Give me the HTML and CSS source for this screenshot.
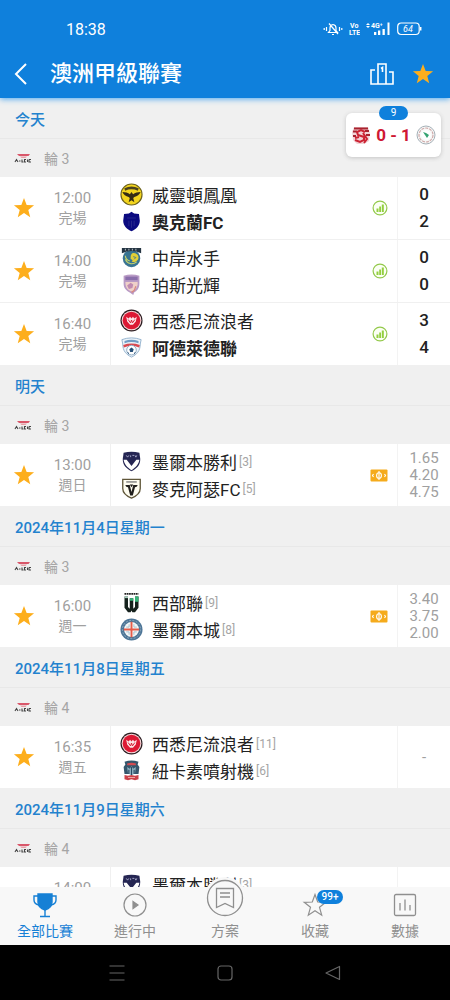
FILE: index.html
```html
<!DOCTYPE html>
<html lang="zh-Hant">
<head>
<meta charset="utf-8">
<meta name="viewport" content="width=device-width, initial-scale=1">
<title>澳洲甲級聯賽</title>
<link rel="stylesheet" href="styles.css">
</head>
<body>
<svg class="sprite" aria-hidden="true">
  <symbol id="star" viewBox="0 0 24 24"><path d="M12 1l2.9 7.6 8.1.4-6.300 5.100 2.100 7.900L12 17.500 5.200 22l2.100-7.900L1 9l8.100-.4z"/></symbol>
  <symbol id="league" viewBox="0 0 18 10">
    <path d="M3 1h13l-1.500 2H5z" fill="#d9576a"/><path d="M6 3.500h7L11.500 5H7.500z" fill="#e8a0a8"/>
    <path d="M1 9l1.500-2.500L4 9M5 8h1.500M8 6.500V9h1.500M12 6.500h-1.500V9H12M13.500 6.500V9M15 6.500V9h2M15 6.500h2" fill="none" stroke="#444" stroke-width="1.100"/>
  </symbol>
  <symbol id="chart" viewBox="0 0 16 16"><circle cx="8" cy="8" r="6.900" fill="#fbfff4" stroke="#93c94b" stroke-width="1.200"/><path d="M4.500 8.500h2v3.500h-2zM7.200 6.500h1.800V12H7.200zM9.800 4.500h2V12h-2z" fill="#93cf3f"/></symbol>
  <symbol id="ticket" viewBox="0 0 18 13"><rect x=".5" y=".5" width="17" height="12" rx="1" fill="#f5ab1c"/><ellipse cx="9" cy="6.500" rx="2.400" ry="2.800" fill="none" stroke="#fff" stroke-width="1.100"/><path d="M9 2v9M3.500 5L2.500 6.500 3.500 8M14.500 5l1 1.500-1 1.500" fill="none" stroke="#fff" stroke-width="1.100"/></symbol>
  <symbol id="phoenix" viewBox="0 0 24 24"><circle cx="12" cy="12" r="11" fill="#f3d51e" stroke="#6f641c" stroke-width="1.200"/><path d="M4.500 5.500Q12 2 19.500 5.500l-.8 2.500Q12 5 5.300 8z" fill="#4b421c"/><path d="M2.500 9.500c3 .2 6 .6 7.800 2.200L12 9.500l1.700 2.200c1.800-1.600 4.800-2 7.800-2.200-1 2.800-3.600 4.500-6.500 5l-1.200 1.200L15 20l-3-2-3 2 1.200-4.300L9 14.500c-2.900-.5-5.500-2.200-6.500-5z" fill="#342c16"/></symbol>
  <symbol id="auckland" viewBox="0 0 24 24"><path d="M12 .8l3 2 5.500.7 1 7.500c0 6-4.500 9.500-9.500 12.200C7 20.500 2.500 17 2.500 11l1-7.500L9 2.800z" fill="#0b0a80"/><path d="M7 8h10M9 11v6M12 11v8M15 11v6" stroke="#25268b" stroke-width="1.200"/></symbol>
  <symbol id="mariners" viewBox="0 0 24 24"><circle cx="12" cy="13" r="10" fill="#397492"/><path d="M1 1h22v6Q12 2 1 7z" fill="#253543"/><path d="M5 2v2M9 2v2M13 2v2M17 2v2" stroke="#c8d2d8"/><path d="M13 7c4-1 7 2 7 5s-3 6-8 5c2-1 1-3-1-3 0-3 0-6 2-7z" fill="#e2cf37"/><path d="M5 14c2 5 8 7 13 3M5 10c0 3 2 5 5 6" fill="none" stroke="#c3d36a" stroke-width="1.300"/><path d="M14 11l3 1-2 2" fill="none" stroke="#397492"/></symbol>
  <symbol id="glory" viewBox="0 0 24 24"><path d="M3 2Q12-1 21 2v9c0 6-3 8-6 10l-1 3-4-3c-4-2-7-5-7-10z" fill="#b99bc5"/><path d="M5 9h14v3c-1 5-4 7-7 8-4-2-7-4-7-11z" fill="#efd0c8"/><path d="M5 3h14v4H5z" fill="#8a6eab"/><path d="M7 13l4-3 3 2-1 4-4 1z" fill="#c08ab0"/><path d="M17 14l-2 5-3 2" fill="none" stroke="#d98a80" stroke-width="1.500"/></symbol>
  <symbol id="wanderers" viewBox="0 0 24 24"><circle cx="12" cy="12" r="11.500" fill="#2a1c20"/><circle cx="12" cy="12" r="10.300" fill="#f5d8d9"/><circle cx="12" cy="12" r="9.200" fill="#dc1934"/><path d="M6.500 8l2.500 2 1.500-2 1.500 2 1.500-2 1.500 2 2.500-2-1 5-3 3.500h-3l-3-3.500z" fill="#fbe6e8"/><path d="M8.500 11l2.500 3.500 1-3 1 3 2.500-3.500" fill="none" stroke="#d41831" stroke-width="1"/></symbol>
  <symbol id="adelaide" viewBox="0 0 24 24"><path d="M1 3Q12-1 23 3l-1 5c0 8-4 12-10 15C6 20 2 16 2 8z" fill="#edf4fa" stroke="#8aacc9"/><path d="M4 4.500Q12 2 20 4.500V7Q12 4.500 4 7z" fill="#719cc4"/><path d="M2.500 9Q12 6 21.500 9l-.8 3Q12 8 3.300 12z" fill="#d94950"/><circle cx="12" cy="15" r="5.500" fill="#fff" stroke="#86a4bd"/><path d="M12 12l2.500 2-1 3h-3l-1-3zM7 17l2 1v2zM17 17l-2 1v2z" fill="#244e77"/></symbol>
  <symbol id="victory" viewBox="0 0 24 24"><path d="M3 2Q12-.5 21 2l1 7c0 7-4 11-10 14C6 20 2 16 2 9z" fill="#252653"/><path d="M3 10h3.500l5.500 7 5.500-7H21c-.5 5-4.500 9-9 12-4.500-3-8.500-7-9-12z" fill="#fff"/><path d="M6 5l1.500 2L9 5m2 0v2m2-2h2m1 0l1 2 1-2" fill="none" stroke="#b4b5d4"/></symbol>
  <symbol id="macarthur" viewBox="0 0 24 24"><path d="M2 1.500h20V12c0 5-4 8.500-10 11C6 20.500 2 17 2 12z" fill="#fffdf0" stroke="#5f5639" stroke-width="1.500"/><path d="M6 4.500h12" stroke="#777" stroke-width="1.500"/><path d="M5 8h5l2 8 2-8h5c-.5 2-1.500 2.500-3 2.500L13.500 20h-3L8 10.500C6.500 10.500 5.500 10 5 8z" fill="#211f1c"/><path d="M10 7.500h4l-2 3z" fill="#211f1c"/></symbol>
  <symbol id="western" viewBox="0 0 24 24"><path d="M4 2h16" stroke="#222" stroke-width="2" stroke-dasharray="2 .6"/><path d="M4 5h4v12l2 2V7h4v12l2-2V5h4v13l-4 5h-3l-1-2-1 2H8l-4-5z" fill="#15211d"/><path d="M16 5h4v6h-4zM10 7h4v3h-4z" fill="#36b579"/><path d="M4 5h4v2H4z" fill="#a9cdbd"/></symbol>
  <symbol id="city" viewBox="0 0 24 24"><circle cx="12" cy="12" r="11.500" fill="#4d7597"/><circle cx="12" cy="12" r="9.500" fill="none" stroke="#92acbf" stroke-dasharray="2 1.500"/><circle cx="12" cy="12" r="7.800" fill="#f5f7f7"/><path d="M12 4v16M4 12h16" stroke="#e65b49" stroke-width="2"/><path d="M6.500 9.500h3v-3m5 0v3h3m0 5h-3v3m-5 0v-3h-3" fill="none" stroke="#a3bfd0"/></symbol>
  <symbol id="jets" viewBox="0 0 24 24"><path d="M4 2Q12-1 20 2l-1 3 2 3-1 8H4L3 8l2-3z" fill="#34566c"/><path d="M7 4q5-2 10 0v2H7z" fill="#d34b51"/><path d="M7 8l3 2 2-3 2 3 3-2-1 7-3 2h-2l-3-2z" fill="#92b4c3"/><path d="M12 8v9M9 11v5M15 11v5" stroke="#294b63" stroke-width="1.300"/><path d="M4 17l4 1 4-1 4 1 4-1v5l-4 1-4-1-4 1-4-1z" fill="#cb4149"/><path d="M8 20h8" stroke="#f1b2ae"/></symbol>
</svg>

<div class="app">
  <header class="header">
    <div class="status">
      <span>18:38</span>
      <div class="status-icons">
        <svg width="20" height="16" viewBox="0 0 20 16" fill="none" stroke="#fff" stroke-width="1.200"><path d="M5.500 11.500h9l-1.500-2V7q0-3-3-3.500Q7 4 7 7v2.500zM9 13.500h2M6 2.500l9 10.500M3.500 6v4M1.200 7v2M16.500 6v4M18.800 7v2"/></svg>
        <svg width="11" height="16" viewBox="0 0 11 16" fill="#fff"><text class="tiny" x="1" y="7">Vo</text><text class="tiny" x="0" y="14">LTE</text></svg>
        <svg width="25" height="16" viewBox="0 0 25 16" fill="#fff"><path d="M0 4l2-2 2 2zM0 5l2 2 2-2zM8 11h2.300v3H8zM12 9.500h2.300V14H12zM16.500 8h2.300v6h-2.300zM21.500 1.500h2V14h-2z"/><text class="tiny" x="5" y="7">4G⁺</text></svg>
        <svg width="25" height="14" viewBox="0 0 25 14"><rect x=".7" y="1" width="21.500" height="11.500" rx="3.500" fill="none" stroke="#fff" stroke-width="1.200"/><path d="M23.700 5v3.500" stroke="#fff" stroke-width="1.500"/><text class="charge" x="6" y="10" fill="#fff">64</text></svg>
      </div>
    </div>
    <div class="titlebar">
      <button class="icon-button back" aria-label="返回"><svg width="14" height="22" viewBox="0 0 14 22" fill="none" stroke="#fff" stroke-width="2"><path d="M12 1L2 11l10 10"/></svg></button>
      <h1>澳洲甲級聯賽</h1>
      <button class="icon-button" aria-label="排名"><svg width="24" height="22" viewBox="0 0 24 22" fill="none" stroke="#fff" stroke-width="1.600"><path d="M8 21V1h8v20zM5 7H1v14h7M19 9h4v12h-7M11 5.500l1.500-1V9"/></svg></button>
      <button class="icon-button favourite" aria-label="收藏聯賽"><svg width="22" height="22"><use href="#star"/></svg></button>
    </div>
  </header>

  <main class="list">
    <a class="live" href="#live" aria-label="即時比分">
      <span class="live-count">9</span>
      <svg width="20" height="20" viewBox="0 0 20 20"><path d="M3 2h14l2 6-1 8-5 3H6l-4-4-1-8z" fill="#f2d2d6"/><path d="M3 3.500h14M2 6.500h4M14 6h4M2 11h3M15 10h4" stroke="#a8232f" stroke-width="2"/><path d="M14 7l-4-2-4 2 1 3 6 2v3l-4 2-5-2M4 13l4-1m4-4l4 6-3 4" fill="none" stroke="#cc2434" stroke-width="2"/></svg>
      <strong>0 - 1</strong>
      <svg width="20" height="20" viewBox="0 0 20 20"><circle cx="10" cy="10" r="9" fill="#f8f9f8" stroke="#a5b0b7"/><circle cx="10" cy="10" r="7" fill="none" stroke="#cfaaaa" stroke-width="1.200" stroke-dasharray="3 1"/><circle cx="10" cy="10" r="4.800" fill="#fff"/><path d="M7 7l3 1 3 2-2 3-2-3z" fill="#35a371"/></svg>
    </a>

    <section>
      <h2>今天</h2>
      <h3><svg width="18" height="10"><use href="#league"/></svg>輪 3</h3>
      <article class="match">
        <button class="icon-button favourite" aria-label="收藏"><svg width="22" height="22"><use href="#star"/></svg></button>
        <div class="when"><time>12:00</time><span>完場</span></div>
        <div class="teams">
          <div class="team"><svg class="crest large"><use href="#phoenix"/></svg>威靈頓鳳凰</div>
          <div class="team winner"><svg class="crest"><use href="#auckland"/></svg>奧克蘭FC</div>
        </div>
        <svg class="tag" width="16" height="16"><use href="#chart"/></svg>
        <div class="score"><span>0</span><span>2</span></div>
      </article>
      <article class="match">
        <button class="icon-button favourite" aria-label="收藏"><svg width="22" height="22"><use href="#star"/></svg></button>
        <div class="when"><time>14:00</time><span>完場</span></div>
        <div class="teams">
          <div class="team"><svg class="crest"><use href="#mariners"/></svg>中岸水手</div>
          <div class="team"><svg class="crest"><use href="#glory"/></svg>珀斯光輝</div>
        </div>
        <svg class="tag" width="16" height="16"><use href="#chart"/></svg>
        <div class="score"><span>0</span><span>0</span></div>
      </article>
      <article class="match">
        <button class="icon-button favourite" aria-label="收藏"><svg width="22" height="22"><use href="#star"/></svg></button>
        <div class="when"><time>16:40</time><span>完場</span></div>
        <div class="teams">
          <div class="team"><svg class="crest large"><use href="#wanderers"/></svg>西悉尼流浪者</div>
          <div class="team winner"><svg class="crest"><use href="#adelaide"/></svg>阿德萊德聯</div>
        </div>
        <svg class="tag" width="16" height="16"><use href="#chart"/></svg>
        <div class="score"><span>3</span><span>4</span></div>
      </article>
    </section>

    <section>
      <h2>明天</h2>
      <h3><svg width="18" height="10"><use href="#league"/></svg>輪 3</h3>
      <article class="match">
        <button class="icon-button favourite" aria-label="收藏"><svg width="22" height="22"><use href="#star"/></svg></button>
        <div class="when"><time>13:00</time><span>週日</span></div>
        <div class="teams">
          <div class="team"><svg class="crest"><use href="#victory"/></svg>墨爾本勝利<small>[3]</small></div>
          <div class="team"><svg class="crest"><use href="#macarthur"/></svg>麥克阿瑟FC<small>[5]</small></div>
        </div>
        <svg class="tag" width="18" height="13"><use href="#ticket"/></svg>
        <div class="odds"><span>1.65</span><span>4.20</span><span>4.75</span></div>
      </article>
    </section>

    <section>
      <h2>2024年11月4日星期一</h2>
      <h3><svg width="18" height="10"><use href="#league"/></svg>輪 3</h3>
      <article class="match">
        <button class="icon-button favourite" aria-label="收藏"><svg width="22" height="22"><use href="#star"/></svg></button>
        <div class="when"><time>16:00</time><span>週一</span></div>
        <div class="teams">
          <div class="team"><svg class="crest"><use href="#western"/></svg>西部聯<small>[9]</small></div>
          <div class="team"><svg class="crest large"><use href="#city"/></svg>墨爾本城<small>[8]</small></div>
        </div>
        <svg class="tag" width="18" height="13"><use href="#ticket"/></svg>
        <div class="odds"><span>3.40</span><span>3.75</span><span>2.00</span></div>
      </article>
    </section>

    <section>
      <h2>2024年11月8日星期五</h2>
      <h3><svg width="18" height="10"><use href="#league"/></svg>輪 4</h3>
      <article class="match">
        <button class="icon-button favourite" aria-label="收藏"><svg width="22" height="22"><use href="#star"/></svg></button>
        <div class="when"><time>16:35</time><span>週五</span></div>
        <div class="teams">
          <div class="team"><svg class="crest large"><use href="#wanderers"/></svg>西悉尼流浪者<small>[11]</small></div>
          <div class="team"><svg class="crest"><use href="#jets"/></svg>紐卡素噴射機<small>[6]</small></div>
        </div>
        <span class="tag"></span>
        <div class="odds"><span>-</span></div>
      </article>
    </section>

    <section>
      <h2>2024年11月9日星期六</h2>
      <h3><svg width="18" height="10"><use href="#league"/></svg>輪 4</h3>
      <article class="match">
        <button class="icon-button favourite" aria-label="收藏"><svg width="22" height="22"><use href="#star"/></svg></button>
        <div class="when"><time>14:00</time><span>週六</span></div>
        <div class="teams">
          <div class="team"><svg class="crest"><use href="#victory"/></svg>墨爾本勝利<small>[3]</small></div>
        </div>
        <span class="tag"></span>
        <div class="odds"><span>-</span></div>
      </article>
    </section>
  </main>

  <nav class="tabs">
    <a class="tab active" href="#all"><svg width="26" height="26" viewBox="0 0 26 26" fill="none" stroke="currentColor" stroke-width="1.400"><path d="M6 2h14v8q0 6-7 8-7-2-7-8z" fill="currentColor"/><path d="M6 4H2v4q0 4 5 5M20 4h4v4q0 4-5 5M13 18v6M8 24.500h10"/></svg>全部比賽</a>
    <a class="tab" href="#live-now"><svg width="26" height="26" viewBox="0 0 26 26" fill="none" stroke="currentColor" stroke-width="1.200"><circle cx="13" cy="13" r="11"/><path d="M11 9.500l5 3.500-5 3.500z" fill="currentColor"/></svg>進行中</a>
    <a class="tab plan" href="#plan"><svg width="44" height="44" viewBox="0 0 44 44" fill="none" stroke="currentColor" stroke-width="1.300"><circle cx="22" cy="22" r="21" fill="#f8f8f8" stroke="none"/><circle cx="22" cy="22" r="17.500"/><path d="M13.500 12.500h17v19L22 27.500l-8.500 4zM17 17h10M17 21h10"/></svg>方案</a>
    <a class="tab" href="#favourites"><span class="badge-anchor"><svg width="26" height="26" viewBox="0 0 26 26" fill="none" stroke="currentColor" stroke-width="1.200"><path d="M13 2.500l2.700 7.500 8.100.3-6.300 5 2.200 7.900-6.700-4.500-6.700 4.500 2.200-7.900-6.300-5 8.100-.3z"/></svg><span class="badge">99+</span></span>收藏</a>
    <a class="tab" href="#data"><svg width="26" height="26" viewBox="0 0 26 26" fill="none" stroke="currentColor" stroke-width="1.300"><rect x="2.500" y="2.500" width="21" height="21" rx="1.500"/><path d="M8 11v7.500M13 7.500v11M18 13v5.500"/></svg>數據</a>
  </nav>

  <footer class="system">
    <button class="icon-button" aria-label="最近使用"><svg width="18" height="18" viewBox="0 0 18 18"><path d="M1.500 2h15M1.500 9h15M1.500 16h15"/></svg></button>
    <button class="icon-button" aria-label="主畫面"><svg width="18" height="18" viewBox="0 0 18 18"><rect x="2" y="2" width="14" height="14" rx="3"/></svg></button>
    <button class="icon-button" aria-label="上一頁"><svg width="18" height="18" viewBox="0 0 18 18"><path d="M15.500 2.500v13L2 9z" stroke-linejoin="round"/></svg></button>
  </footer>
</div>
</body>
</html>
```

FILE: styles.css
```css
* { box-sizing: border-box; }
body { margin: 0; font-family: Roboto, "Noto Sans CJK TC", sans-serif; color: #222; }
h1, h2, h3 { margin: 0; }
svg { display: block; flex: none; }
a { color: inherit; text-decoration: none; }
.sprite { position: absolute; width: 0; height: 0; }

.app { display: flex; flex-direction: column; height: 100vh; overflow: hidden; background: #f0f0f0; }

.header { flex: none; background: #0f80dc; color: #fff; box-shadow: 0 1px 6px #4ba6ee; position: relative; z-index: 1; }
.status { display: flex; align-items: center; justify-content: space-between; height: 49px; padding: 9px 28px 0 66px; font-size: 16px; }
.status-icons { display: flex; align-items: center; gap: 6px; }
.tiny { font: bold 7px Roboto, sans-serif; }
.charge { font: italic 9px Roboto, sans-serif; }
.titlebar { display: flex; align-items: center; height: 49px; padding: 0 16px 0 14px; }
.titlebar h1 { flex: 1; padding-left: 22px; font-size: 22px; font-weight: 500; line-height: 32px; }
.titlebar .favourite { margin-left: 18px; }

.icon-button { display: grid; place-items: center; padding: 0; border: 0; background: none; cursor: pointer; }
.favourite { color: #fdae1c; fill: currentColor; }

.list { position: relative; flex: 1; min-height: 0; overflow: hidden; }
.list h2 { display: flex; align-items: center; height: 41px; padding-left: 15px; border-bottom: 1px solid #e8e8e8; color: #2382ce; font-size: 15px; font-weight: 500; }
.list h3 { display: flex; align-items: center; gap: 12px; height: 38px; padding-left: 14px; color: #a5a5a5; font-size: 14px; font-weight: 400; }

.match { display: grid; grid-template-columns: 48px 62px 1fr auto 53px; height: 62px; background: #fff; }
.match + .match { margin-top: 1px; }
.when { display: flex; flex-direction: column; justify-content: center; align-items: center; padding-right: 13px; color: #a0a0a0; font-size: 14px; line-height: 20px; }
.when time { font-size: 15px; }
.teams { padding: 4px 0 4px 9px; border-left: 1px solid #f0f0f0; }
.team { display: flex; align-items: center; gap: 9px; height: 27px; font-size: 17px; white-space: nowrap; }
.team small { margin-left: -7px; color: #a5a5a5; font-size: 12px; }
.winner { font-weight: 700; }
.crest { width: 23px; height: 21px; }
.crest.large { height: 23px; }
.tag { align-self: center; margin-right: 9px; }
.score, .odds { display: flex; flex-direction: column; align-items: center; justify-content: center; border-left: 1px solid #f3f3f3; }
.score { font-size: 17px; font-weight: 500; line-height: 27px; }
.odds { color: #a0a0a0; font-size: 15px; line-height: 17px; }

.live { position: absolute; top: 15px; right: 9px; display: flex; align-items: center; justify-content: center; gap: 5px; width: 95px; height: 44px; border-radius: 6px; background: #fff; color: #cf1834; box-shadow: 0 1px 4px #c4c4c4; font-size: 17px; }
.live strong { font-weight: 700; white-space: nowrap; }
.live-count { position: absolute; top: -7px; left: 33px; width: 29px; border-radius: 7px; background: #0f80dc; color: #fff; font-size: 10px; line-height: 14px; text-align: center; }

.tabs { position: relative; z-index: 1; display: grid; grid-template: 58px / repeat(5, 1fr); flex: none; background: #f8f8f8; color: #8f8f8f; }
.tab { display: flex; flex-direction: column; align-items: center; justify-content: flex-end; gap: 2px; min-height: 0; padding-bottom: 3px; font-size: 14px; line-height: 22px; }
.tab.active { color: #1680d5; }
.plan { gap: 0; }
.badge-anchor { position: relative; }
.badge { position: absolute; top: -2px; left: 15px; width: 26px; border-radius: 7px; background: #0f80dc; color: #fff; font-size: 10px; font-weight: 500; line-height: 14px; text-align: center; }

.system { display: flex; align-items: center; justify-content: center; gap: 90px; flex: none; height: 55px; background: #000; }
.system svg { fill: none; stroke: #666; stroke-width: 1.2; }
```
